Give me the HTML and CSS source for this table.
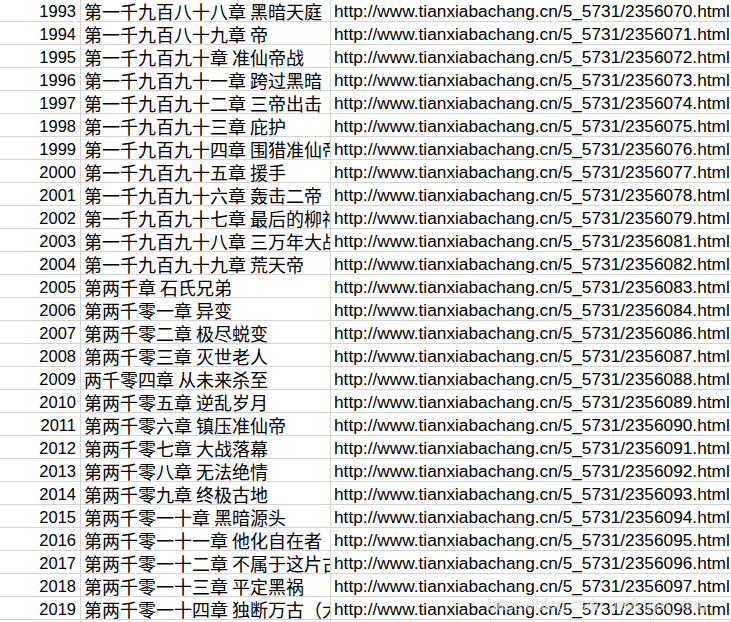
FILE: index.html
```html
<!DOCTYPE html>
<html lang="zh-CN">
<head>
<meta charset="utf-8">
<title>章节列表</title>
<link rel="stylesheet" href="styles.css">
</head>
<body>
<div class="sheet">
  <div class="row"><div class="c num">1993</div><div class="c title">第一千九百八十八章 黑暗天庭</div><div class="c url">http://www.tianxiabachang.cn/5_5731/2356070.html</div></div>
  <div class="row"><div class="c num">1994</div><div class="c title">第一千九百八十九章 帝</div><div class="c url">http://www.tianxiabachang.cn/5_5731/2356071.html</div></div>
  <div class="row"><div class="c num">1995</div><div class="c title">第一千九百九十章 准仙帝战</div><div class="c url">http://www.tianxiabachang.cn/5_5731/2356072.html</div></div>
  <div class="row"><div class="c num">1996</div><div class="c title">第一千九百九十一章 跨过黑暗</div><div class="c url">http://www.tianxiabachang.cn/5_5731/2356073.html</div></div>
  <div class="row"><div class="c num">1997</div><div class="c title">第一千九百九十二章 三帝出击</div><div class="c url">http://www.tianxiabachang.cn/5_5731/2356074.html</div></div>
  <div class="row"><div class="c num">1998</div><div class="c title">第一千九百九十三章 庇护</div><div class="c url">http://www.tianxiabachang.cn/5_5731/2356075.html</div></div>
  <div class="row"><div class="c num">1999</div><div class="c title">第一千九百九十四章 围猎准仙帝</div><div class="c url">http://www.tianxiabachang.cn/5_5731/2356076.html</div></div>
  <div class="row"><div class="c num">2000</div><div class="c title">第一千九百九十五章 援手</div><div class="c url">http://www.tianxiabachang.cn/5_5731/2356077.html</div></div>
  <div class="row"><div class="c num">2001</div><div class="c title">第一千九百九十六章 轰击二帝</div><div class="c url">http://www.tianxiabachang.cn/5_5731/2356078.html</div></div>
  <div class="row"><div class="c num">2002</div><div class="c title">第一千九百九十七章 最后的柳神</div><div class="c url">http://www.tianxiabachang.cn/5_5731/2356079.html</div></div>
  <div class="row"><div class="c num">2003</div><div class="c title">第一千九百九十八章 三万年大战</div><div class="c url">http://www.tianxiabachang.cn/5_5731/2356081.html</div></div>
  <div class="row"><div class="c num">2004</div><div class="c title">第一千九百九十九章 荒天帝</div><div class="c url">http://www.tianxiabachang.cn/5_5731/2356082.html</div></div>
  <div class="row"><div class="c num">2005</div><div class="c title">第两千章 石氏兄弟</div><div class="c url">http://www.tianxiabachang.cn/5_5731/2356083.html</div></div>
  <div class="row"><div class="c num">2006</div><div class="c title">第两千零一章 异变</div><div class="c url">http://www.tianxiabachang.cn/5_5731/2356084.html</div></div>
  <div class="row"><div class="c num">2007</div><div class="c title">第两千零二章 极尽蜕变</div><div class="c url">http://www.tianxiabachang.cn/5_5731/2356086.html</div></div>
  <div class="row"><div class="c num">2008</div><div class="c title">第两千零三章 灭世老人</div><div class="c url">http://www.tianxiabachang.cn/5_5731/2356087.html</div></div>
  <div class="row"><div class="c num">2009</div><div class="c title">两千零四章 从未来杀至</div><div class="c url">http://www.tianxiabachang.cn/5_5731/2356088.html</div></div>
  <div class="row"><div class="c num">2010</div><div class="c title">第两千零五章 逆乱岁月</div><div class="c url">http://www.tianxiabachang.cn/5_5731/2356089.html</div></div>
  <div class="row"><div class="c num">2011</div><div class="c title">第两千零六章 镇压准仙帝</div><div class="c url">http://www.tianxiabachang.cn/5_5731/2356090.html</div></div>
  <div class="row"><div class="c num">2012</div><div class="c title">第两千零七章 大战落幕</div><div class="c url">http://www.tianxiabachang.cn/5_5731/2356091.html</div></div>
  <div class="row"><div class="c num">2013</div><div class="c title">第两千零八章 无法绝情</div><div class="c url">http://www.tianxiabachang.cn/5_5731/2356092.html</div></div>
  <div class="row"><div class="c num">2014</div><div class="c title">第两千零九章 终极古地</div><div class="c url">http://www.tianxiabachang.cn/5_5731/2356093.html</div></div>
  <div class="row"><div class="c num">2015</div><div class="c title">第两千零一十章 黑暗源头</div><div class="c url">http://www.tianxiabachang.cn/5_5731/2356094.html</div></div>
  <div class="row"><div class="c num">2016</div><div class="c title">第两千零一十一章 他化自在者</div><div class="c url">http://www.tianxiabachang.cn/5_5731/2356095.html</div></div>
  <div class="row"><div class="c num">2017</div><div class="c title">第两千零一十二章 不属于这片古史</div><div class="c url">http://www.tianxiabachang.cn/5_5731/2356096.html</div></div>
  <div class="row"><div class="c num">2018</div><div class="c title">第两千零一十三章 平定黑祸</div><div class="c url">http://www.tianxiabachang.cn/5_5731/2356097.html</div></div>
  <div class="row"><div class="c num">2019</div><div class="c title">第两千零一十四章 独断万古（大结局）</div><div class="c url">http://www.tianxiabachang.cn/5_5731/2356098.html</div></div>
  <div class="row empty"><div class="c"></div><div class="c"></div><div class="c"></div><div class="c"></div><div class="c"></div><div class="c"></div><div class="c"></div><div class="c"></div></div>
  <div class="watermark">https://blog.csdn.net/yeyu_xing</div>
</div>
</body>
</html>
```

FILE: styles.css
```css
html, body {
  margin: 0;
  padding: 0;
  background: #ffffff;
}
body {
  overflow: hidden;
  width: 731px;
  height: 622px;
}
.sheet {
  position: relative;
  margin-top: -1px;
  font-family: "Liberation Sans", Arial, "Noto Sans CJK SC", sans-serif;
  color: #000000;
}
.row {
  display: grid;
  grid-template-columns: 81px 250px 80px 80px 80px 80px 80px 80px;
  height: 23px;
}
.c {
  box-sizing: border-box;
  height: 23px;
  padding-top: 2px;
  border-bottom: 1px solid #d4d4d4;
  border-right: 1px solid #d4d4d4;
  white-space: nowrap;
  overflow: hidden;
  line-height: 21px;
}
.num {
  text-align: right;
  padding-right: 4px;
  font-size: 16.5px;
}
.title {
  padding-left: 3px;
  font-family: "Noto Sans CJK SC", "Liberation Sans", sans-serif;
  font-size: 18px;
}
.url {
  grid-column: 3 / -1;
  border-right: none;
  padding-left: 3px;
  font-size: 17.3px;
}
.watermark {
  position: absolute;
  right: 24px;
  bottom: 29px;
  font-family: "Liberation Sans", Arial, sans-serif;
  font-size: 16px;
  color: rgba(255, 255, 255, 0.55);
  text-shadow: 0 0 1px rgba(120, 120, 120, 0.45);
  pointer-events: none;
}
```
